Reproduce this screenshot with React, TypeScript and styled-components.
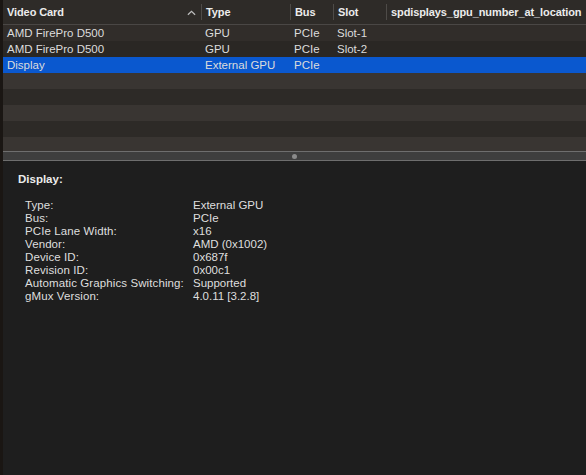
import styled, { createGlobalStyle } from 'styled-components';

const GlobalStyle = createGlobalStyle`
  html, body {
    margin: 0;
    padding: 0;
    background: #1e1e1e;
  }
  body {
    font-family: 'Liberation Sans', Arial, sans-serif;
    -webkit-font-smoothing: antialiased;
  }
`;

const COLUMNS = '198px 89px 43px 53px 1fr';

type Gpu = { name: string; type: string; bus: string; slot: string; selected?: boolean };

const gpus: Gpu[] = [
  { name: 'AMD FirePro D500', type: 'GPU', bus: 'PCIe', slot: 'Slot-1' },
  { name: 'AMD FirePro D500', type: 'GPU', bus: 'PCIe', slot: 'Slot-2' },
  { name: 'Display', type: 'External GPU', bus: 'PCIe', slot: '', selected: true },
];

const details: [string, string][] = [
  ['Type:', 'External GPU'],
  ['Bus:', 'PCIe'],
  ['PCIe Lane Width:', 'x16'],
  ['Vendor:', 'AMD (0x1002)'],
  ['Device ID:', '0x687f'],
  ['Revision ID:', '0x00c1'],
  ['Automatic Graphics Switching:', 'Supported'],
  ['gMux Version:', '4.0.11 [3.2.8]'],
];

const App = () => {
  const fillers = 5;
  return (
    <Window>
      <GlobalStyle />
      <Table>
        <HeaderRow>
          <HeaderCell>
            Video Card
            <Caret viewBox="0 0 10 6">
              <path d="M1 5 L5 1.2 L9 5" fill="none" stroke="#bdbdbd" strokeWidth="1.4" />
            </Caret>
          </HeaderCell>
          <HeaderCell divided>Type</HeaderCell>
          <HeaderCell divided>Bus</HeaderCell>
          <HeaderCell divided>Slot</HeaderCell>
          <HeaderCell divided>spdisplays_gpu_number_at_location</HeaderCell>
        </HeaderRow>
        {gpus.map((gpu, i) => (
          <Row key={i} selected={gpu.selected} odd={i % 2 === 1}>
            <Cell>{gpu.name}</Cell>
            <Cell>{gpu.type}</Cell>
            <Cell>{gpu.bus}</Cell>
            <Cell>{gpu.slot}</Cell>
            <Cell />
          </Row>
        ))}
        {Array.from({ length: fillers }).map((_, i) => (
          <Row key={`f${i}`} odd={i % 2 === 1} filler />
        ))}
      </Table>
      <Splitter>
        <Grip />
      </Splitter>
      <Detail>
        <DetailTitle>Display:</DetailTitle>
        <DetailList>
          {details.map(([k, v]) => (
            <DetailItem key={k}>
              <DetailKey>{k}</DetailKey>
              <span>{v}</span>
            </DetailItem>
          ))}
        </DetailList>
      </Detail>
    </Window>
  );
};

const Window = styled.div`
  width: 586px;
  height: 475px;
  display: flex;
  flex-direction: column;
  border-left: 3px solid #1a1613;
  box-sizing: border-box;
  background: #1e1e1e;
  overflow: hidden;
`;

const Table = styled.div`
  height: 151px;
  display: flex;
  flex-direction: column;
  background: #393532;
  overflow: hidden;
`;

const HeaderRow = styled.div`
  display: grid;
  grid-template-columns: ${COLUMNS};
  height: 24px;
  background: #2e2b28;
  border-bottom: 1px solid #4a4745;
  flex-shrink: 0;
`;

const HeaderCell = styled.div<{ divided?: boolean }>`
  position: relative;
  display: flex;
  align-items: center;
  padding-left: 4px;
  font-size: 11px;
  font-weight: bold;
  color: #ececec;
  white-space: nowrap;
  overflow: hidden;
  letter-spacing: -0.1px;
  border-left: ${(p) => (p.divided ? '1px solid #4e4b48' : 'none')};
  margin: ${(p) => (p.divided ? '4px 0' : '0')};
`;

const Caret = styled.svg`
  position: absolute;
  right: 5px;
  top: 10px;
  width: 9px;
  height: 6px;
`;

const Row = styled.div<{ selected?: boolean; odd?: boolean; filler?: boolean }>`
  display: grid;
  grid-template-columns: ${COLUMNS};
  height: 16px;
  flex-shrink: 0;
  background: ${(p) =>
    p.selected ? '#0a58cf' : p.filler ? (p.odd ? '#2d2a27' : '#393532') : p.odd ? '#2a2724' : '#312d2a'};
`;

const Cell = styled.div`
  display: flex;
  align-items: center;
  padding-left: 4px;
  font-size: 11.5px;
  color: #dcdcdc;
  white-space: nowrap;
  overflow: hidden;
`;

const Splitter = styled.div`
  height: 8px;
  flex-shrink: 0;
  background: #3e3e3e;
  border-top: 1px solid #6e6e6e;
  border-bottom: 1px solid #6e6e6e;
  display: flex;
  align-items: center;
  justify-content: center;
`;

const Grip = styled.div`
  width: 5px;
  height: 5px;
  border-radius: 50%;
  background: #8a8a8a;
`;

const Detail = styled.div`
  flex: 1;
  padding: 11px 0 0 15px;
  color: #dedede;
  font-size: 11.5px;
`;

const DetailTitle = styled.div`
  font-weight: bold;
  font-size: 11.5px;
  color: #ececec;
  height: 14px;
  line-height: 14px;
`;

const DetailList = styled.div`
  margin-top: 13px;
  padding-left: 7px;
  display: flex;
  flex-direction: column;
`;

const DetailItem = styled.div`
  display: grid;
  grid-template-columns: 168px 1fr;
  height: 13px;
  line-height: 13px;
`;

const DetailKey = styled.span`
  letter-spacing: 0.1px;
`;

export default App;
